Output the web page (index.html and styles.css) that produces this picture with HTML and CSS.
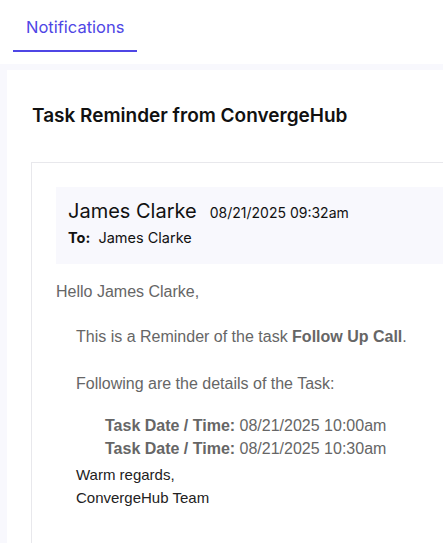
FILE: index.html
```html
<!DOCTYPE html>
<html lang="en">
<head>
    <meta charset="UTF-8">
    <meta name="viewport" content="width=device-width, initial-scale=1.0">
    <title>Notifications</title>
    <link rel="stylesheet" href="styles.css">
</head>
<body>
    <div class="tabs">
        <a class="tab active" href="#">Notifications</a>
    </div>
    <div class="content">
        <div class="card">
            <h2 class="card-title">Task Reminder from ConvergeHub</h2>
            <div class="mail">
                <div class="mail-head">
                    <div class="mail-from">
                        <span class="sender">James Clarke</span>
                        <span class="sent-at">08/21/2025 09:32am</span>
                    </div>
                    <div class="mail-to"><b>To:</b>&nbsp; James Clarke</div>
                </div>
                <div class="mail-body">
                    <p class="greet">Hello James Clarke,</p>
                    <div class="indent">
                        <p class="line intro">This is a Reminder of the task <b>Follow Up Call</b>.</p>
                        <p class="line details">Following are the details of the Task:</p>
                        <div class="task-times">
                            <div class="line"><b>Task Date / Time:</b> 08/21/2025 10:00am</div>
                            <div class="line"><b>Task Date / Time:</b> 08/21/2025 10:30am</div>
                        </div>
                        <div class="sign">
                            Warm regards,<br>
                            ConvergeHub Team
                        </div>
                    </div>
                </div>
            </div>
        </div>
    </div>
</body>
</html>
```

FILE: styles.css
```css
* {
    box-sizing: border-box;
}
html, body {
    margin: 0;
    overflow: hidden;
}
body {
    background: #fff;
    font-family: Inter, "Noto Sans", sans-serif;
    color: #111;
    width: 443px;
    height: 543px;
    display: flex;
    flex-direction: column;
}
.tabs {
    height: 64px;
    flex: none;
    display: flex;
    align-items: flex-start;
    padding-left: 13px;
}
.tab {
    display: block;
    padding: 15px 13px 11px;
    line-height: 24px;
    font-size: 16.5px;
    color: #4f46e5;
    text-decoration: none;
    border-bottom: 2px solid #4f46e5;
}
.content {
    flex: 1;
    display: flex;
    background: #f8f8fd;
    padding: 6px 0 0 7px;
    overflow: hidden;
}
.card {
    flex: none;
    display: flex;
    flex-direction: column;
    background: #fff;
    width: 700px;
    padding: 32px 24px 0;
}
.card-title {
    margin: 0 0 33px 1px;
    font-size: 19px;
    line-height: 27px;
    font-weight: 600;
    color: #111;
}
.mail {
    flex: 1;
    border: 1px solid #e8e8ec;
    border-bottom: none;
    padding: 24px;
}
.mail-head {
    background: #f8f8fd;
    height: 77px;
    padding: 12px 12px 0;
}
.mail-from {
    display: flex;
    align-items: baseline;
    gap: 13px;
}
.sender {
    font-size: 20px;
}
.sent-at {
    font-size: 14px;
}
.mail-to {
    margin-top: 6px;
    font-size: 14.5px;
}
.mail-body {
    font-family: "Liberation Sans", Arial, sans-serif;
    color: #666;
    font-size: 16px;
    line-height: 23px;
}
.mail-body p {
    margin: 0;
}
.greet {
    padding-top: 16px;
}
.indent {
    padding-left: 20px;
}
.intro {
    padding-top: 22px;
}
.details {
    padding-top: 24px;
}
.task-times {
    padding: 19px 0 0 29px;
}
.sign {
    padding-top: 3px;
    font-size: 15px;
    color: #222;
}
```
